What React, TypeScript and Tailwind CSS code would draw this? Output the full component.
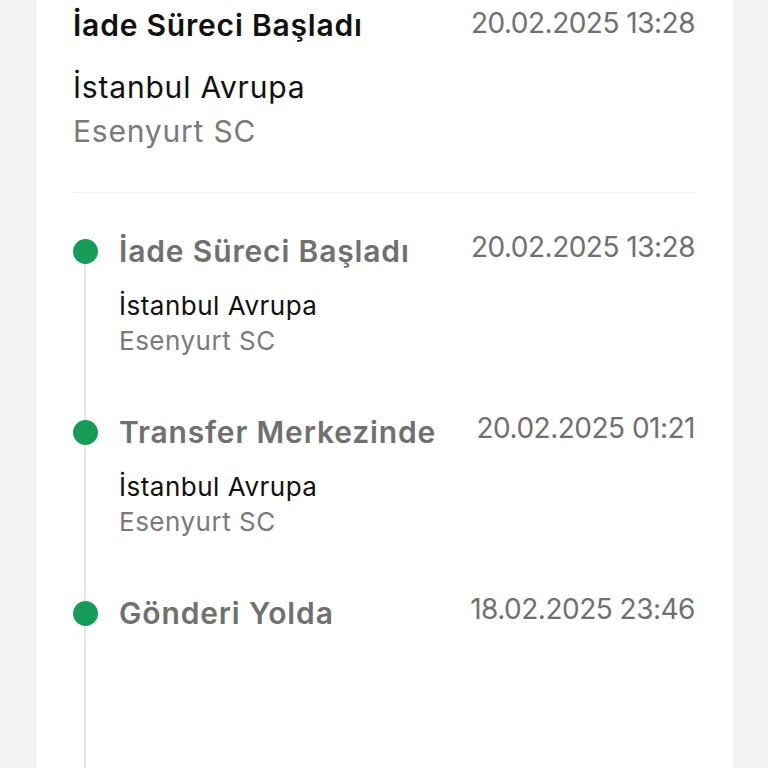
import React from "react";

type Item = { title: string; date: string; city?: string; sub?: string };

const items: Item[] = [
  { title: "İade Süreci Başladı", date: "20.02.2025 13:28", city: "İstanbul Avrupa", sub: "Esenyurt SC" },
  { title: "Transfer Merkezinde", date: "20.02.2025 01:21", city: "İstanbul Avrupa", sub: "Esenyurt SC" },
  { title: "Gönderi Yolda", date: "18.02.2025 23:46" },
];

export default function App() {
  return (
    <div className="min-h-screen h-[768px] overflow-hidden bg-[#f3f4f6] flex" style={{ fontFamily: "Inter, 'Noto Sans', sans-serif" }}>
      <div className="ml-[37px] w-[696px] bg-white pl-[36px] pr-[38px] flex flex-col">
        <div className="pt-[9px]">
          <div className="flex justify-between items-start">
            <div className="text-[30px] leading-[32px] font-semibold tracking-[0.8px] text-[#111111]">İade Süreci Başladı</div>
            <div className="text-[28px] leading-[28px] tracking-[-0.5px] text-[#707070]">20.02.2025 13:28</div>
          </div>
          <div className="mt-[28px] text-[30px] leading-[36px] tracking-[0.8px] text-[#111111]">İstanbul Avrupa</div>
          <div className="mt-[8px] text-[30px] leading-[36px] tracking-[0.8px] text-[#7a7a7a]">Esenyurt SC</div>
        </div>
        <div className="mt-[43px] h-px bg-[#f1f1f1]" />
        <div className="mt-[42px] flex flex-col flex-1">
          {items.map((it, i) => {
            const last = i === items.length - 1;
            return (
              <div key={i} className={`flex ${last ? "flex-1" : "h-[181px]"}`}>
                <div className="w-[24px] flex flex-col items-center">
                  <div className={`h-[4px] w-[2px] ${i === 0 ? "bg-transparent" : "bg-[#e6e6e6]"}`} />
                  <div className="w-[25px] h-[25px] rounded-full bg-[#179c57] shrink-0" />
                  <div className="flex-1 w-[2px] bg-[#e6e6e6]" />
                </div>
                <div className="ml-[22px] flex-1">
                  <div className="flex justify-between items-start">
                    <div className="text-[30px] leading-[32px] font-semibold tracking-[0.85px] text-[#707070]">{it.title}</div>
                    <div className="text-[28px] leading-[24px] tracking-[-0.5px] text-[#707070]">{it.date}</div>
                  </div>
                  {it.city && (
                    <>
                      <div className="mt-[22px] text-[26px] leading-[33px] tracking-[0.5px] text-[#111111]">{it.city}</div>
                      <div className="mt-[2px] text-[26px] leading-[33px] tracking-[0.5px] text-[#7a7a7a]">{it.sub}</div>
                    </>
                  )}
                </div>
              </div>
            );
          })}
        </div>
      </div>
    </div>
  );
}
